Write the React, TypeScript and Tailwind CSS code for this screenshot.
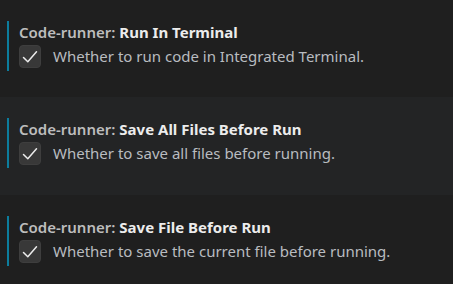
import React from 'react';

type Setting = {
  label: string;
  description: string;
  highlighted?: boolean;
  height: string;
};

const settings: Setting[] = [
  { label: 'Run In Terminal', description: 'Whether to run code in Integrated Terminal.', height: 'h-[97px]' },
  { label: 'Save All Files Before Run', description: 'Whether to save all files before running.', highlighted: true, height: 'h-[98px]' },
  { label: 'Save File Before Run', description: 'Whether to save the current file before running.', height: 'h-[89px]' },
];

const Check = () => (
  <svg width="18" height="18" viewBox="0 0 18 18" fill="none">
    <path d="M2.5 9.5 L6.8 13.8 L15.5 3.8" stroke="#ececec" strokeWidth="1.5" strokeLinecap="round" strokeLinejoin="round" />
  </svg>
);

const SettingItem = ({ s }: { s: Setting }) => (
  <div className={`${s.height} pt-[21px] pl-[7px] ${s.highlighted ? 'bg-[#232425]' : 'bg-[#1f1f1f]'}`}>
    <div className="border-l-2 border-[#0c7d9d] pl-[10px] pb-[3px]">
      <div className="h-[22px] leading-[22px] text-[15px] font-semibold text-[#bdbdbd] whitespace-nowrap">
        Code-runner: <span className="font-bold text-[#ececec]">{s.label}</span>
      </div>
      <div className="mt-[2px] flex items-center">
        <div className="w-[22px] h-[23px] rounded-[4px] bg-[#383838] border border-[#3e3e3e] flex items-center justify-center">
          <Check />
        </div>
        <span className="ml-[12px] text-[15px] text-[#b9bcc0] whitespace-nowrap">{s.description}</span>
      </div>
    </div>
  </div>
);

export default function App() {
  return (
    <div className="w-[453px] h-[284px] overflow-hidden bg-[#1f1f1f]" style={{ fontFamily: '"Noto Sans", "Open Sans", sans-serif' }}>
      {settings.map((s) => (
        <SettingItem key={s.label} s={s} />
      ))}
    </div>
  );
}
